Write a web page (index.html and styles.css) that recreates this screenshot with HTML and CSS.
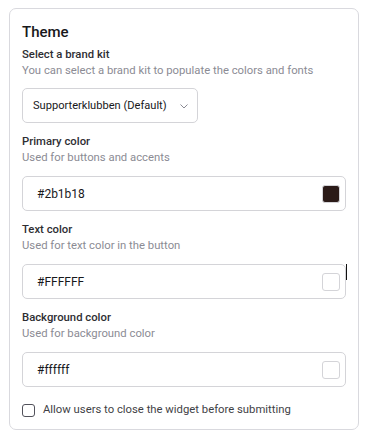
FILE: index.html
```html
<!DOCTYPE html>
<html>
<head>
<meta charset="utf-8">
<link rel="stylesheet" href="styles.css">
</head>
<body>
<div class="card">
  <h2 class="title">Theme</h2>
  <div class="field">
    <div class="label">Select a brand kit</div>
    <div class="hint">You can select a brand kit to populate the colors and fonts</div>
    <div class="select">
      <span>Supporterklubben (Default)</span>
      <svg class="chev" width="8" height="5" viewBox="0 0 8 5"><path d="M0.5 0.5 L4 4 L7.5 0.5" fill="none" stroke="#8a8a93" stroke-width="1"/></svg>
    </div>
  </div>
  <div class="field">
    <div class="label">Primary color</div>
    <div class="hint">Used for buttons and accents</div>
    <div class="input"><span>#2b1b18</span><span class="swatch dark"></span></div>
  </div>
  <div class="field">
    <div class="label">Text color</div>
    <div class="hint">Used for text color in the button</div>
    <div class="input"><span>#FFFFFF</span><span class="swatch"></span><span class="caret"></span></div>
  </div>
  <div class="field">
    <div class="label">Background color</div>
    <div class="hint">Used for background color</div>
    <div class="input"><span>#ffffff</span><span class="swatch"></span></div>
  </div>
  <label class="check"><span class="box"></span><span>Allow users to close the widget before submitting</span></label>
</div>
</body>
</html>
```
FILE: styles.css
```css
* { box-sizing: border-box; }
html, body { margin: 0; padding: 0; background: #fff; }
body {
  font-family: Roboto, "Liberation Sans", sans-serif;
  color: #27272a;
  padding: 8px 14px 0 9px;
}
.card {
  width: 350px;
  border: 1px solid #d9d9de;
  border-radius: 7px;
  padding: 10px 12px 11px 12px;
}
.title {
  margin: 0;
  font-size: 15px;
  line-height: 24px;
  font-weight: 500;
  color: #18181b;
  padding-top: 1px;
  height: 24px;
}
.field { margin-top: 4px; }
.field + .field { margin-top: 11px; }
.label {
  font-size: 11.3px;
  line-height: 16px;
  font-weight: 500;
  color: #2e2e33;
}
.hint {
  font-size: 11.3px;
  line-height: 16px;
  color: #8b8b94;
}
.select {
  margin-top: 9px;
  width: 176px;
  height: 35px;
  border: 1px solid #d4d4d8;
  border-radius: 5px;
  display: flex;
  align-items: center;
  justify-content: space-between;
  padding: 0 9px 0 10px;
  font-size: 11.1px;
  color: #18181b;
  white-space: nowrap;
}
.chev { margin-top: 1px; }
.input {
  position: relative;
  margin-top: 10px;
  height: 35px;
  border: 1px solid #d4d4d8;
  border-radius: 5px;
  display: flex;
  align-items: center;
  justify-content: space-between;
  padding: 0 5px 0 14px;
  font-size: 12px;
  color: #18181b;
}
.swatch {
  width: 18px;
  height: 18px;
  border: 1px solid #d4d4d8;
  border-radius: 3px;
  background: #fff;
}
.swatch.dark { background: #2b1b18; }
.caret {
  position: absolute;
  right: -2px;
  top: -1px;
  width: 1.5px;
  height: 16px;
  background: #111;
}
.check {
  margin-top: 15px;
  display: flex;
  align-items: center;
  gap: 8px;
  font-size: 11.3px;
  line-height: 16px;
  color: #3f3f46;
}
.box {
  width: 13px;
  height: 13px;
  border: 1px solid #52525b;
  border-radius: 3px;
}
```
